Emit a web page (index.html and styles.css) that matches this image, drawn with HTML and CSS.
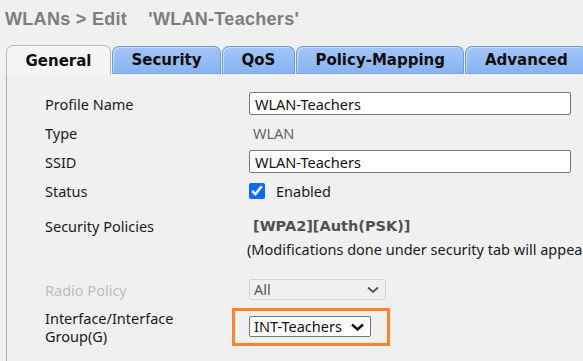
FILE: index.html
```html
<!DOCTYPE html>
<html>
<head>
<meta charset="utf-8">
<link rel="stylesheet" href="styles.css">
</head>
<body>
<div class="page">
  <h1 class="title">WLANs &gt; Edit    'WLAN-Teachers'</h1>
  <div class="tabs">
    <div class="tab active">General</div>
    <div class="tab">Security</div>
    <div class="tab">QoS</div>
    <div class="tab">Policy-Mapping</div>
    <div class="tab">Advanced</div>
  </div>
  <div class="panel">
    <div class="row">
      <div class="label">Profile Name</div>
      <div class="value"><input class="text" type="text" value="WLAN-Teachers" readonly></div>
    </div>
    <div class="row">
      <div class="label">Type</div>
      <div class="value"><span class="static">WLAN</span></div>
    </div>
    <div class="row">
      <div class="label">SSID</div>
      <div class="value"><input class="text" type="text" value="WLAN-Teachers" readonly></div>
    </div>
    <div class="row">
      <div class="label">Status</div>
      <div class="value check-wrap"><input class="check" type="checkbox" checked><span class="check-label">Enabled</span></div>
    </div>
    <div class="row row-sec">
      <div class="label">Security Policies</div>
      <div class="value">
        <div class="sec-policy">[WPA2][Auth(PSK)]</div>
        <div class="sec-note">(Modifications done under security tab will appear after applying the changes.)</div>
      </div>
    </div>
    <div class="row row-radio">
      <div class="label disabled">Radio Policy</div>
      <div class="value">
        <div class="select select-disabled">
          <span>All</span>
          <svg class="chev" width="12" height="8" viewBox="0 0 12 8"><path d="M1 1.5 L6 6 L11 1.5" fill="none" stroke="#555" stroke-width="2"/></svg>
        </div>
      </div>
    </div>
    <div class="row row-iface">
      <div class="label two-line"><div>Interface/Interface</div><div>Group(G)</div></div>
      <div class="value">
        <div class="highlight">
          <div class="select select-active">
            <span>INT-Teachers</span>
            <svg class="chev" width="13" height="8" viewBox="0 0 13 8"><path d="M1 1.5 L6.5 6.5 L12 1.5" fill="none" stroke="#111" stroke-width="2.4"/></svg>
          </div>
        </div>
      </div>
    </div>
  </div>
</div>
</body>
</html>
```
FILE: styles.css
```css
html, body {
  margin: 0;
  padding: 0;
  background: #f0f0f0;
}
body {
  width: 583px;
  height: 361px;
  overflow: hidden;
  font-family: "Noto Sans", "Open Sans", sans-serif;
  font-size: 14.5px;
  color: #1a1a1a;
}
.page {
  width: 583px;
}
.title {
  margin: 0;
  padding: 9px 0 0 5px;
  height: 37px;
  box-sizing: border-box;
  font-family: "Liberation Sans", Arial, sans-serif;
  font-weight: bold;
  font-size: 18px;
  line-height: 20px;
  letter-spacing: 0.3px;
  color: #7d7d7d;
  white-space: pre;
}
.tabs {
  display: flex;
  align-items: flex-end;
  gap: 1px;
  height: 38px;
  padding-left: 6px;
  box-sizing: border-box;
  white-space: nowrap;
}
.tab {
  box-sizing: border-box;
  height: 28px;
  padding: 0 18.5px;
  display: flex;
  align-items: center;
  justify-content: center;
  font-family: "DejaVu Sans", Verdana, sans-serif;
  font-weight: bold;
  font-size: 15px;
  color: #0d0d0d;
  background: linear-gradient(#a3c6f8, #88b3f1);
  border: 1px solid #6b9ad9;
  border-bottom-color: #7ba6e6;
  border-radius: 7px 7px 0 0;
  box-shadow: inset 1px 1px 0 rgba(255,255,255,0.45);
  margin-bottom: 1px;
}
.tab.active {
  height: 30px;
  margin-bottom: 0;
  padding-top: 1px;
  background: #f5f5f5;
  border: 1px solid #b9b9b9;
  border-bottom: none;
  box-shadow: none;
}
.panel {
  margin-left: 6px;
  border-left: 1px solid #a9a9a9;
  padding: 14px 0 30px 38px;
  height: 286px;
  box-sizing: border-box;
}
.row {
  display: grid;
  grid-template-columns: 204px auto;
  align-items: center;
  height: 29px;
}
.label {
  line-height: 18px;
  white-space: nowrap;
}
.label.disabled {
  color: #bdbdbd;
}
.two-line div {
  height: 18px;
}
.value {
  white-space: nowrap;
}
.text {
  box-sizing: border-box;
  width: 322px;
  height: 23px;
  margin: 0;
  padding: 0 5px;
  border: 1px solid #767676;
  border-radius: 2px;
  background: #fff;
  font-family: "Noto Sans", "Open Sans", sans-serif;
  font-size: 14.5px;
  color: #111;
  outline: none;
}
.static {
  padding-left: 4px;
  color: #666;
}
.check-wrap {
  display: flex;
  align-items: center;
}
.check {
  width: 16px;
  height: 16px;
  margin: 0;
  accent-color: #0a6cf5;
}
.check-label {
  margin-left: 11px;
}
.row-sec {
  height: auto;
  margin-top: 7px;
  align-items: start;
}
.row-sec .label {
  line-height: 28px;
}
.sec-policy {
  padding-left: 4px;
  font-family: "DejaVu Sans", Verdana, sans-serif;
  font-weight: bold;
  font-size: 14.5px;
  line-height: 28px;
  color: #4f4f4f;
}
.sec-note {
  margin-left: -2px;
  line-height: 18px;
}
.row-radio {
  margin-top: 17px;
}
.row-iface {
  margin-top: 4px;
  height: 38px;
}
.select {
  box-sizing: border-box;
  height: 21px;
  display: flex;
  align-items: center;
  justify-content: space-between;
  padding: 0 6px 0 4px;
  border-radius: 2px;
  line-height: 19px;
}
.select-disabled {
  width: 137px;
  border: 1px solid #d2d2d2;
  background: #f0f0f0;
  color: #555;
}
.select-active {
  width: 122px;
  border: 1px solid #767676;
  background: #fff;
  color: #111;
}
.chev {
  display: block;
}
.highlight {
  width: fit-content;
  margin-left: -17px;
  border: 3px solid #f7832c;
  padding: 5px 16px 6px 14px;
}
```
